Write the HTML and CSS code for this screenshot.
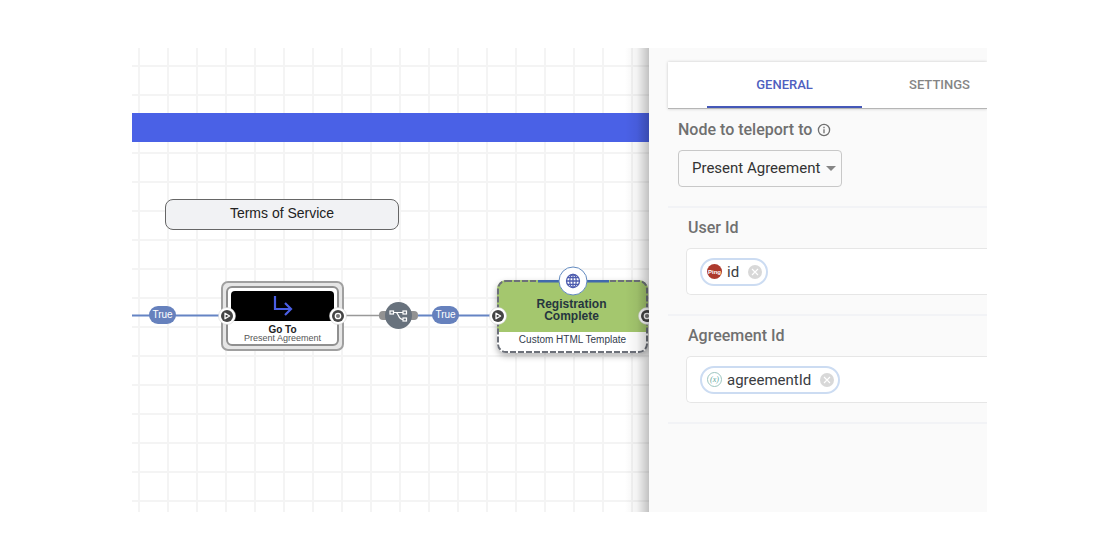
FILE: index.html
```html
<!DOCTYPE html>
<html lang="en">
<head>
<meta charset="utf-8">
<title>Flow editor</title>
<link rel="stylesheet" href="styles.css">
</head>
<body>
<svg class="defs" aria-hidden="true">
  <symbol id="port-in" viewBox="0 0 18 18">
    <circle cx="9" cy="9" r="8.5" fill="#fff" stroke="#ccc" stroke-width=".5"/>
    <circle cx="9" cy="9" r="6" fill="#444"/>
    <path d="M7 6.2v5.6L11.6 9z" fill="#444" stroke="#fff" stroke-width="1.3" stroke-linejoin="round"/>
  </symbol>
  <symbol id="port-out" viewBox="0 0 18 18">
    <circle cx="9" cy="9" r="8.5" fill="#fff" stroke="#ccc" stroke-width=".5"/>
    <circle cx="9" cy="9" r="6" fill="#444"/>
    <circle cx="9" cy="9" r="2.7" fill="#777" stroke="#fff" stroke-width="1.3"/>
  </symbol>
  <symbol id="clear" viewBox="0 0 14 14">
    <circle cx="7" cy="7" r="7" fill="#d8d8d8"/>
    <path d="M4 4l6 6M10 4l-6 6" stroke="#fff" stroke-width="1.1"/>
  </symbol>
</svg>
<div class="editor">
  <main class="canvas">
    <div class="band"></div>
    <svg class="wires" width="517" height="464" aria-hidden="true">
      <path d="M0 267.5H87M286 267.5H358" stroke="#6584c4" stroke-width="2"/>
      <path d="M213 267.5H250" stroke="#999" stroke-width="1.5"/>
      <rect x="247" y="263" width="39" height="9" rx="4" fill="#929292"/>
      <circle cx="266.5" cy="267.5" r="13.5" fill="#68727d"/>
      <g fill="none" stroke="#fff" stroke-width="1.2">
        <rect x="258" y="263" width="3.500" height="3"/>
        <rect x="271" y="263" width="3.500" height="3"/>
        <rect x="271" y="270" width="3.500" height="3"/>
        <path d="M261.500 264.500h9.500M264 264.500c3 1 2 7 7 7"/>
      </g>
    </svg>
    <span class="pill pill-first">True</span>
    <span class="pill pill-second">True</span>
    <div class="note">Terms of Service</div>

    <article class="node goto">
      <div class="goto-card">
        <div class="goto-head">
          <svg width="20" height="22" viewBox="0 0 20 22" fill="none" stroke="#4a5fe5" stroke-width="2.2" aria-hidden="true"><path d="M2 1v13h15M12 8l6 6-6 6"/></svg>
        </div>
        <strong>Go To</strong>
        <span>Present Agreement</span>
      </div>
      <svg class="port port-left"><use href="#port-in"/></svg>
      <svg class="port port-right"><use href="#port-out"/></svg>
    </article>

    <article class="node complete">
      <h2>Registration Complete</h2>
      <p>Custom HTML Template</p>
      <svg class="outline" aria-hidden="true"><rect x="1" y="1" width="149" height="71" rx="8" fill="none" stroke="#6c7079" stroke-width="2" stroke-dasharray="6 2"/><path d="M41 1H112" stroke="#4169ad" stroke-width="3"/></svg>
      <svg class="globe" viewBox="0 0 30 30" aria-hidden="true">
        <circle cx="15" cy="15" r="14" fill="#fff" stroke="#638bc0"/>
        <g fill="none" stroke="#4d5cae" stroke-width="1.3"><circle cx="15" cy="15" r="6.500"/><ellipse cx="15" cy="15" rx="3.200" ry="6.500"/><path d="M15 8.500v13M8.500 15h13M9.500 11.600h11M9.500 18.400h11"/></g>
      </svg>
      <svg class="port port-left"><use href="#port-in"/></svg>
      <svg class="port port-right"><use href="#port-out"/></svg>
    </article>
    <div class="edge-shade"></div>
  </main>

  <aside class="panel">
    <nav class="tabs" role="tablist">
      <button class="tab active" role="tab" aria-selected="true">GENERAL</button>
      <button class="tab" role="tab" aria-selected="false">SETTINGS</button>
    </nav>
    <section class="target">
      <div class="label-row">
        <label for="target">Node to teleport to</label>
        <svg width="14" height="14" viewBox="0 0 14 14" fill="none" stroke="#707070" stroke-width="1.300" aria-hidden="true"><circle cx="7" cy="7" r="5.600"/><path d="M7 6.200v4M7 3.800v1.400"/></svg>
      </div>
      <div class="select-wrap">
        <select id="target"><option>Present Agreement</option></select>
        <svg class="caret" width="10" height="5" aria-hidden="true"><path d="M0 0h10L5 5z" fill="#858585"/></svg>
      </div>
    </section>
    <section class="field">
      <label for="user">User Id</label>
      <div class="box">
        <span class="chip">
          <svg width="15" height="15" viewBox="0 0 15 15" aria-hidden="true"><circle cx="7.500" cy="7.500" r="7.500" fill="#ad3a2d"/><text class="ping" x="7.500" y="9.500" text-anchor="middle">Ping</text></svg>
          id
          <button class="clear" aria-label="Remove id"><svg width="14" height="14"><use href="#clear"/></svg></button>
        </span>
        <input id="user" type="text">
      </div>
    </section>
    <section class="field">
      <label for="agreement">Agreement Id</label>
      <div class="box">
        <span class="chip">
          <svg width="15" height="15" viewBox="0 0 15 15" aria-hidden="true"><circle cx="7.500" cy="7.500" r="7" fill="#fff" stroke="#9cc5bf"/><text class="var" x="7.500" y="10" text-anchor="middle">(x)</text></svg>
          agreementId
          <button class="clear" aria-label="Remove agreementId"><svg width="14" height="14"><use href="#clear"/></svg></button>
        </span>
        <input id="agreement" type="text">
      </div>
    </section>
  </aside>
</div>
</body>
</html>
```
FILE: styles.css
```css
* { box-sizing: border-box; }
body {
  margin: 0;
  min-height: 100vh;
  padding: 48px 133px 48px 132px;
  display: flex;
  background: #fff;
  font-family: Roboto, "Liberation Sans", sans-serif;
}
button, input, select { font: inherit; }
.defs { position: absolute; width: 0; height: 0; }
.editor { flex: 1; display: flex; min-width: 0; }

.canvas {
  position: relative;
  flex: 1;
  min-width: 0;
  overflow: hidden;
  font-family: "Liberation Sans", Arial, sans-serif;
  background-color: #fff;
  background-image:
    linear-gradient(90deg, #f4f4f4 2px, transparent 2px),
    linear-gradient(#f4f4f4 2px, transparent 2px);
  background-size: 29px 29px;
  background-position: 6px 17px;
}
.band { position: absolute; top: 65px; left: 0; right: 0; height: 29px; background: #4a61e6; }
.wires { position: absolute; top: 0; left: 0; }
.pill {
  position: absolute;
  top: 258px;
  width: 27px;
  height: 18px;
  border-radius: 9px;
  background: #6681bd;
  color: #fff;
  font-size: 10px;
  line-height: 18px;
  text-align: center;
}
.pill-first { left: 17px; }
.pill-second { left: 300px; }
.note {
  position: absolute;
  top: 151px;
  left: 33px;
  width: 234px;
  height: 31px;
  border: 1px solid #666;
  border-radius: 8px;
  background: #f1f2f4;
  color: #222;
  font-size: 14px;
  line-height: 27px;
  text-align: center;
}
.node { position: absolute; }
.port { position: absolute; width: 18px; height: 18px; }
.goto {
  left: 89px;
  top: 233px;
  width: 123px;
  padding: 3px;
  border: 2px solid #a0a0a0;
  border-radius: 7px;
  background: #e6e6e6;
}
.goto-card {
  display: flex;
  flex-direction: column;
  align-items: center;
  height: 60px;
  padding: 3px;
  border: 2px solid #909090;
  border-radius: 6px;
  background: #fff;
  color: #222;
  font-size: 9px;
  line-height: 9px;
}
.goto-head {
  align-self: stretch;
  display: flex;
  justify-content: center;
  align-items: center;
  flex: 0 0 30px;
  margin-bottom: 4px;
  border-radius: 4px 4px 0 0;
  background: #000;
}
.goto strong { font-size: 10px; }
.goto span { color: #555; white-space: nowrap; }
.goto .port { top: 24px; }
.goto .port-left { left: -5px; }
.goto .port-right { right: -5px; }

.complete {
  left: 365px;
  top: 232px;
  width: 151px;
  height: 73px;
  border-radius: 9px;
  background: linear-gradient(#a4c76e 52px, #fff 52px);
  box-shadow: 0 3px 6px rgba(0, 0, 0, .3);
  text-align: center;
}
.complete h2 {
  margin: 0;
  padding: 18px 32px 0 30px;
  color: #26363f;
  font-size: 12px;
  line-height: 12px;
}
.complete p { margin: 12px 0 0; color: #333c4c; font-size: 10px; line-height: 12px; }
.outline { position: absolute; top: 0; left: 0; width: 151px; height: 73px; }
.globe { position: absolute; top: -14px; left: 61px; width: 30px; height: 30px; }
.complete .port { top: 27px; }
.complete .port-left { left: -8px; }
.complete .port-right { right: -8px; }
.edge-shade {
  position: absolute;
  top: 0;
  right: 0;
  bottom: 0;
  width: 24px;
  background: linear-gradient(90deg, transparent, rgba(0, 0, 0, .05) 50%, rgba(0, 0, 0, .24));
}

.panel {
  flex: 0 0 338px;
  overflow: hidden;
  padding: 14px 0 0 19px;
  background: #fafafa;
}
.tabs {
  display: flex;
  height: 47px;
  padding-left: 39px;
  overflow: hidden;
  background: #fff;
  border-bottom: 1px solid #b5b5b5;
  box-shadow: 0 0 3px rgba(0, 0, 0, .2);
}
.tab {
  flex: 0 0 155px;
  padding: 1px 0 0;
  border: 0;
  border-bottom: 2px solid transparent;
  background: none;
  color: #858585;
  font-size: 13px;
  font-weight: 500;
}
.tab.active { color: #4f5fc0; border-color: #4558b8; }
.target { height: 99px; padding: 11px 0 0 10px; border-bottom: 2px solid #f2f3f6; }
.label-row { display: flex; align-items: center; gap: 5px; }
label { color: #707070; font-size: 16px; font-weight: 500; line-height: 20px; }
.select-wrap { position: relative; width: 164px; margin-top: 10px; }
select {
  appearance: none;
  display: block;
  width: 100%;
  height: 37px;
  padding: 0 18px 2px 13px;
  border: 1px solid #c8c8c8;
  border-radius: 4px;
  background: #fafafa;
  color: #333;
  font-size: 15px;
}
.caret { position: absolute; right: 6px; top: 16px; pointer-events: none; }
.field { height: 108px; padding: 10px 0 0 20px; border-bottom: 2px solid #f2f3f6; }
.box {
  display: flex;
  align-items: center;
  height: 47px;
  margin: 10px 0 0 -2px;
  padding-left: 13px;
  border: 1px solid #e6e6e6;
  border-right: 0;
  border-radius: 5px 0 0 5px;
  background: #fff;
}
.box input { flex: 1; min-width: 0; border: 0; outline: 0; background: none; }
.chip {
  display: flex;
  align-items: center;
  gap: 5px;
  height: 28px;
  padding: 0 4px 0 5px;
  border: 2px solid #ccdcf2;
  border-radius: 14px;
  color: #3a3d42;
  font-size: 15px;
}
.clear { display: flex; margin-left: 4px; padding: 0; border: 0; background: none; }
.ping { fill: #fff; font: bold 6px "Liberation Sans", sans-serif; }
.var { fill: #5fa79d; font: italic 8px "Liberation Serif", serif; }
```
